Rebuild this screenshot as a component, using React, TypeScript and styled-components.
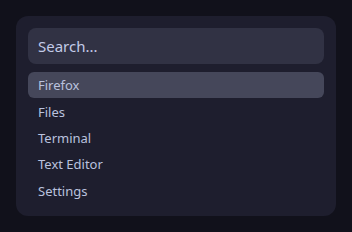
import React from 'react';
import styled, { createGlobalStyle } from 'styled-components';

const GlobalStyle = createGlobalStyle`
  html, body {
    margin: 0;
    padding: 0;
    background: #11111b;
    font-family: "Noto Sans", "DejaVu Sans", sans-serif;
  }
`;

// Styled Components
const Page = styled.div`
  width: 352px;
  height: 232px;
  padding: 16px;
  box-sizing: border-box;
`;

const Launcher = styled.div`
  background: #1e1e2e;
  border-radius: 12px;
  padding: 12px;
  height: 200px;
  box-sizing: border-box;
  display: flex;
  flex-direction: column;
  gap: 8px;
`;

const SearchInput = styled.input`
  height: 36px;
  width: 100%;
  box-sizing: border-box;
  border: none;
  outline: none;
  border-radius: 8px;
  background: #313244;
  color: #cdd6f4;
  padding: 0 10px;
  font-family: inherit;
  font-size: 15px;

  &::placeholder {
    color: #c3cbe8;
    opacity: 1;
  }
`;

const List = styled.ul`
  list-style: none;
  margin: 0;
  padding: 0;
  display: flex;
  flex-direction: column;
`;

const Item = styled.li<{ $active?: boolean }>`
  height: 26.4px;
  display: flex;
  align-items: center;
  padding: 0 10px;
  border-radius: 6px;
  font-size: 13px;
  color: #bac2de;
  background: ${(p) => (p.$active ? '#45475a' : 'transparent')};
`;

const apps = ['Firefox', 'Files', 'Terminal', 'Text Editor', 'Settings'];

export default function App() {
  return (
    <>
      <GlobalStyle />
      <Page>
        <Launcher>
          <SearchInput placeholder="Search..." />
          <List>
            {apps.map((name, i) => (
              <Item key={name} $active={i === 0}>
                {name}
              </Item>
            ))}
          </List>
        </Launcher>
      </Page>
    </>
  );
}
